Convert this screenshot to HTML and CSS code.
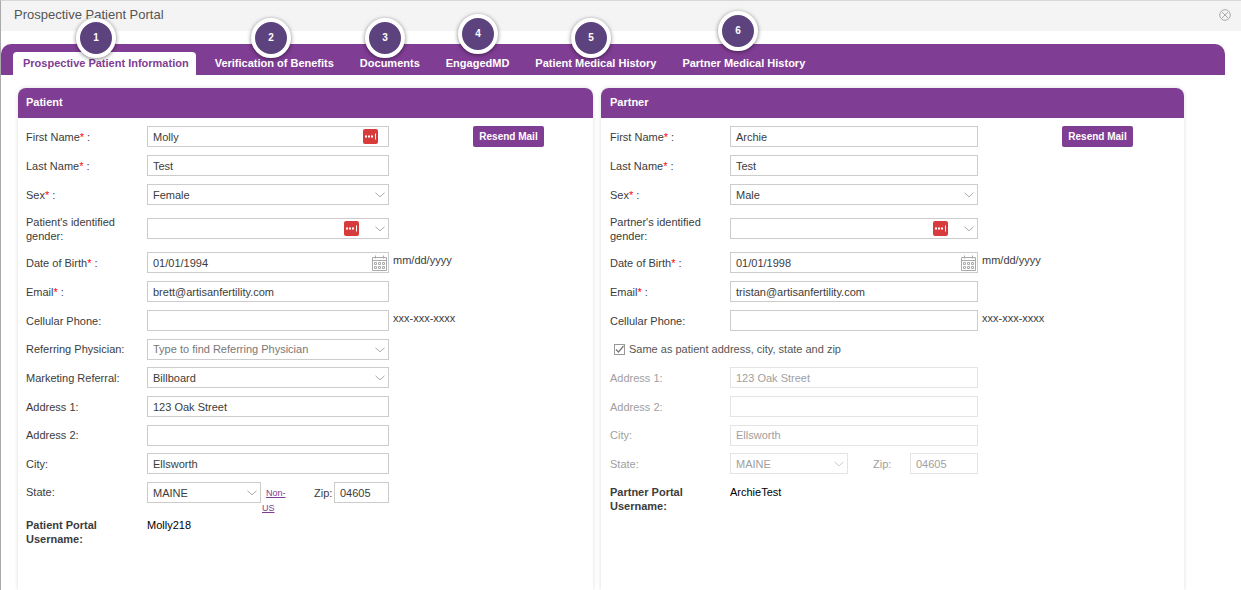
FILE: index.html
```html
<!DOCTYPE html>
<html lang="en">

<head>
  <meta charset="utf-8">
  <title>Prospective Patient Portal</title>
  <meta name="viewport" content="width=device-width, initial-scale=1">
  <link rel="stylesheet" href="styles.css">
</head>

<body>
  <!-- shared icons -->
  <svg class="sprite" aria-hidden="true">
    <symbol id="chevron" viewBox="0 0 10 6">
      <path d="M0.5 0.8 L5 4.8 L9.5 0.8" fill="none" stroke="currentColor" stroke-width="1" />
    </symbol>
    <symbol id="calendar" viewBox="0 0 15 16">
      <path d="M0.5 2.5h14v13h-14z M0.5 5.5h14 M3.5 0.5v3 M11.5 0.5v3" fill="none" stroke="currentColor" />
      <path d="M2.5 7.5h2v2h-2z M6.5 7.5h2v2h-2z M10.5 7.5h2v2h-2z M2.5 11.5h2v2h-2z M6.5 11.5h2v2h-2z M10.5 11.5h2v2h-2z" fill="none" stroke="currentColor" />
    </symbol>
    <symbol id="autofill" viewBox="0 0 15 15">
      <rect width="15" height="15" rx="2" fill="#d83b3b" />
      <path d="M2 6.5h2v2h-2z M5 6.5h2v2h-2z M8 6.5h2v2h-2z M12 4.5h1v6h-1z" fill="#fff" />
    </symbol>
    <symbol id="tick" viewBox="0 0 11 11">
      <path d="M2 5.5 L4.5 8 L9.5 2" fill="none" stroke="currentColor" stroke-width="1.2" />
    </symbol>
    <symbol id="close" viewBox="0 0 12 12">
      <circle cx="6" cy="6" r="5.3" fill="none" stroke="currentColor" />
      <path d="M3 3 L9 9 M9 3 L3 9" stroke="currentColor" />
    </symbol>
  </svg>

  <div class="dialog">
    <header class="title-bar">
      <h1>Prospective Patient Portal</h1>
      <button class="close" type="button" aria-label="Close"><svg><use href="#close" /></svg></button>
    </header>

    <nav class="tabs">
      <a class="tab active" href="#">Prospective Patient Information</a>
      <a class="tab" href="#">Verification of Benefits</a>
      <a class="tab" href="#">Documents</a>
      <a class="tab" href="#">EngagedMD</a>
      <a class="tab" href="#">Patient Medical History</a>
      <a class="tab" href="#">Partner Medical History</a>
    </nav>

    <main class="panels">
      <!-- Patient -->
      <section class="panel">
        <h2>Patient</h2>
        <form class="form">
          <div class="row">
            <label for="p-first">First Name<em>*</em> :</label>
            <div class="field"><input type="text" id="p-first" value="Molly"><svg class="autofill"><use href="#autofill" /></svg></div>
            <div class="aside"><button class="btn" type="button">Resend Mail</button></div>
          </div>
          <div class="row">
            <label for="p-last">Last Name<em>*</em> :</label>
            <div class="field"><input type="text" id="p-last" value="Test"></div>
            <div class="aside"></div>
          </div>
          <div class="row">
            <label for="p-sex">Sex<em>*</em> :</label>
            <div class="field"><select id="p-sex"><option>Female</option><option>Male</option></select><svg class="chevron"><use href="#chevron" /></svg></div>
            <div class="aside"></div>
          </div>
          <div class="row tall">
            <label for="p-gender">Patient's identified gender:</label>
            <div class="field"><select id="p-gender"><option></option></select><svg class="autofill beside"><use href="#autofill" /></svg><svg class="chevron"><use href="#chevron" /></svg></div>
            <div class="aside"></div>
          </div>
          <div class="row">
            <label for="p-dob">Date of Birth<em>*</em> :</label>
            <div class="field"><input type="text" id="p-dob" value="01/01/1994"><svg class="calendar"><use href="#calendar" /></svg></div>
            <div class="aside"><span class="hint">mm/dd/yyyy</span></div>
          </div>
          <div class="row">
            <label for="p-email">Email<em>*</em> :</label>
            <div class="field"><input type="text" id="p-email" value="brett@artisanfertility.com"></div>
            <div class="aside"></div>
          </div>
          <div class="row">
            <label for="p-cell">Cellular Phone:</label>
            <div class="field"><input type="text" id="p-cell"></div>
            <div class="aside"><span class="hint">xxx-xxx-xxxx</span></div>
          </div>
          <div class="row">
            <label for="p-physician">Referring Physician:</label>
            <div class="field"><input type="text" id="p-physician" placeholder="Type to find Referring Physician"><svg class="chevron"><use href="#chevron" /></svg></div>
            <div class="aside"></div>
          </div>
          <div class="row">
            <label for="p-marketing">Marketing Referral:</label>
            <div class="field"><select id="p-marketing"><option>Billboard</option></select><svg class="chevron"><use href="#chevron" /></svg></div>
            <div class="aside"></div>
          </div>
          <div class="row">
            <label for="p-addr1">Address 1:</label>
            <div class="field"><input type="text" id="p-addr1" value="123 Oak Street"></div>
            <div class="aside"></div>
          </div>
          <div class="row">
            <label for="p-addr2">Address 2:</label>
            <div class="field"><input type="text" id="p-addr2"></div>
            <div class="aside"></div>
          </div>
          <div class="row">
            <label for="p-city">City:</label>
            <div class="field"><input type="text" id="p-city" value="Ellsworth"></div>
            <div class="aside"></div>
          </div>
          <div class="row state">
            <label for="p-state">State:</label>
            <div class="group">
              <div class="field"><select id="p-state"><option>MAINE</option></select><svg class="chevron"><use href="#chevron" /></svg></div>
              <div class="non-us"><a href="#">Non-<br>US</a></div>
              <label class="zip-label" for="p-zip">Zip:</label>
              <input class="zip" type="text" id="p-zip" value="04605">
            </div>
            <div class="aside"></div>
          </div>
          <div class="row username">
            <b class="name">Patient Portal Username:</b>
            <span class="value">Molly218</span>
          </div>
        </form>
      </section>

      <!-- Partner -->
      <section class="panel partner">
        <h2>Partner</h2>
        <form class="form">
          <div class="row">
            <label for="r-first">First Name<em>*</em> :</label>
            <div class="field"><input type="text" id="r-first" value="Archie"></div>
            <div class="aside"><button class="btn" type="button">Resend Mail</button></div>
          </div>
          <div class="row">
            <label for="r-last">Last Name<em>*</em> :</label>
            <div class="field"><input type="text" id="r-last" value="Test"></div>
            <div class="aside"></div>
          </div>
          <div class="row">
            <label for="r-sex">Sex<em>*</em> :</label>
            <div class="field"><select id="r-sex"><option>Male</option><option>Female</option></select><svg class="chevron"><use href="#chevron" /></svg></div>
            <div class="aside"></div>
          </div>
          <div class="row tall">
            <label for="r-gender">Partner's identified gender:</label>
            <div class="field"><select id="r-gender"><option></option></select><svg class="autofill beside"><use href="#autofill" /></svg><svg class="chevron"><use href="#chevron" /></svg></div>
            <div class="aside"></div>
          </div>
          <div class="row">
            <label for="r-dob">Date of Birth<em>*</em> :</label>
            <div class="field"><input type="text" id="r-dob" value="01/01/1998"><svg class="calendar"><use href="#calendar" /></svg></div>
            <div class="aside"><span class="hint">mm/dd/yyyy</span></div>
          </div>
          <div class="row">
            <label for="r-email">Email<em>*</em> :</label>
            <div class="field"><input type="text" id="r-email" value="tristan@artisanfertility.com"></div>
            <div class="aside"></div>
          </div>
          <div class="row">
            <label for="r-cell">Cellular Phone:</label>
            <div class="field"><input type="text" id="r-cell"></div>
            <div class="aside"><span class="hint">xxx-xxx-xxxx</span></div>
          </div>
          <div class="row same">
            <div class="check"><input type="checkbox" id="r-same" checked><svg><use href="#tick" /></svg></div>
            <label for="r-same">Same as patient address, city, state and zip</label>
          </div>
          <div class="row off">
            <label for="r-addr1">Address 1:</label>
            <div class="field"><input type="text" id="r-addr1" value="123 Oak Street" disabled></div>
            <div class="aside"></div>
          </div>
          <div class="row off">
            <label for="r-addr2">Address 2:</label>
            <div class="field"><input type="text" id="r-addr2" disabled></div>
            <div class="aside"></div>
          </div>
          <div class="row off">
            <label for="r-city">City:</label>
            <div class="field"><input type="text" id="r-city" value="Ellsworth" disabled></div>
            <div class="aside"></div>
          </div>
          <div class="row off">
            <label for="r-state">State:</label>
            <div class="group wide">
              <div class="field"><select id="r-state" disabled><option>MAINE</option></select><svg class="chevron"><use href="#chevron" /></svg></div>
              <label class="zip-label" for="r-zip">Zip:</label>
              <input class="zip" type="text" id="r-zip" value="04605" disabled>
            </div>
            <div class="aside"></div>
          </div>
          <div class="row username">
            <b class="name">Partner Portal Username:</b>
            <span class="value">ArchieTest</span>
          </div>
        </form>
      </section>
    </main>

    <!-- numbered markers over the tabs -->
    <span class="marker m1">1</span>
    <span class="marker m2">2</span>
    <span class="marker m3">3</span>
    <span class="marker m4">4</span>
    <span class="marker m5">5</span>
    <span class="marker m6">6</span>
  </div>
</body>

</html>
```
FILE: styles.css
```css
* {
  box-sizing: border-box;
}

body {
  margin: 0;
  font-family: "Liberation Sans", Arial, sans-serif;
  font-size: 11px;
  line-height: 14px;
  color: #3c3c3c;
  background: #fff;
}

.sprite {
  display: none;
}

.dialog {
  position: relative;
  display: flex;
  flex-direction: column;
  min-height: 100vh;
  border-left: 1px solid #aaa;
  border-top: 1px solid #d8d8d8;
}

.title-bar {
  display: flex;
  align-items: center;
  justify-content: space-between;
  height: 30px;
  padding: 0 10px 2px 13px;
  background: #f4f4f4;
}

.title-bar h1 {
  margin: 0;
  font-size: 13px;
  font-weight: normal;
  color: #555;
}

.close {
  width: 12px;
  height: 12px;
  padding: 0;
  border: none;
  background: none;
  color: #aaa;
}

.close svg {
  display: block;
  width: 12px;
  height: 12px;
}

/* tabs */
.tabs {
  display: flex;
  align-items: flex-end;
  gap: 9px;
  height: 31px;
  margin: 13px 16px 0 0;
  padding-left: 12px;
  background: #803d94;
  border-radius: 10px 10px 0 0;
}

.tab {
  height: 23px;
  padding: 0 7px 0 10px;
  line-height: 23px;
  font-weight: bold;
  color: #fff;
  text-decoration: none;
  white-space: nowrap;
}

.tab.active {
  background: #fff;
  color: #803d94;
  border-radius: 4px 4px 0 0;
}

/* panels */
.panels {
  flex: 1;
  display: grid;
  grid-template-columns: 575fr 583fr;
  gap: 8px;
  padding: 13px 57px 0 17px;
}

.panel {
  border-radius: 8px 8px 0 0;
  box-shadow: 0 0 4px #ddd;
}

.panel h2 {
  height: 30px;
  margin: 0;
  padding-left: 8px;
  font-size: 11px;
  line-height: 29px;
  color: #fff;
  background: #803d94;
  border-radius: 8px 8px 0 0;
}

.form {
  padding: 4px 0 0 8px;
}

.row {
  display: flex;
  align-items: center;
  height: 29px;
}

.row:nth-child(3n+8) {
  height: 28px;
}

.row.tall {
  height: 39px;
}

.row > label,
.name {
  flex: none;
  width: 121px;
  padding-right: 20px;
}

.row em {
  color: #f00;
  font-style: normal;
}

.field {
  position: relative;
  flex: 1;
}

input[type="text"],
select {
  display: block;
  width: 100%;
  height: 21px;
  margin: 0;
  padding: 0 5px;
  border: 1px solid #ccc;
  border-radius: 0;
  background: #fff;
  font: inherit;
  color: #3c3c3c;
  appearance: none;
}

input::placeholder {
  color: #777;
}

.field svg {
  position: absolute;
  pointer-events: none;
}

.chevron {
  top: 8px;
  right: 4px;
  width: 10px;
  height: 6px;
  color: #aaa;
}

.autofill {
  top: 3px;
  right: 11px;
  width: 15px;
  height: 15px;
}

.autofill.beside {
  right: 30px;
}

.calendar {
  top: 3px;
  right: 2px;
  width: 15px;
  height: 16px;
  color: #aaa;
}

.aside {
  flex: none;
  width: 204px;
  padding-left: 4px;
}

.hint {
  display: block;
  padding-bottom: 5px;
}

.btn {
  display: block;
  width: 71px;
  height: 21px;
  margin-left: 80px;
  padding: 0;
  border: none;
  border-radius: 2px;
  background: #803d94;
  color: #fff;
  font-family: inherit;
  font-size: 10px;
  font-weight: bold;
}

.partner h2 {
  padding-left: 9px;
}

.partner .form {
  padding-left: 9px;
}

.partner .row > label,
.partner .name {
  width: 120px;
}

.partner .aside {
  width: 206px;
}

/* state and zip */
.group {
  display: flex;
  align-items: center;
  flex: 1;
  height: 21px;
}

.row.state {
  align-items: flex-start;
  height: 33px;
  padding-top: 4px;
}

.state > label {
  line-height: 21px;
}

.non-us {
  align-self: flex-start;
  width: 53px;
  padding: 4px 0 0 1px;
  text-indent: 4px;
  font-size: 9px;
  line-height: 15px;
}

.non-us a {
  color: #803d94;
}

.zip-label {
  width: 20px;
}

input.zip {
  width: 55px;
}

.wide .zip-label {
  width: 62px;
  padding-left: 25px;
}

.wide input.zip {
  width: 68px;
}

/* address copied from the patient */
.off,
.off input[type="text"],
.off select {
  color: #a0a0a0;
  opacity: 1;
}

.off input[type="text"],
.off select {
  border-color: #e4e4e4;
}

.off .chevron {
  color: #ccc;
}

.same {
  gap: 4px;
  padding-left: 4px;
  color: #555;
}

.partner .same label {
  width: auto;
}

.check {
  position: relative;
  width: 11px;
  height: 11px;
}

.check input {
  display: block;
  width: 11px;
  height: 11px;
  margin: 0;
  border: 1px solid #999;
  appearance: none;
}

.check svg {
  position: absolute;
  top: 0;
  left: 0;
  width: 11px;
  height: 11px;
  color: #777;
  pointer-events: none;
}

.row.username {
  align-items: flex-start;
  height: auto;
  padding-top: 7px;
}

.value {
  color: #000;
}

/* markers */
.marker {
  position: absolute;
  width: 40px;
  height: 40px;
  border: 4px solid #fff;
  border-radius: 50%;
  background: #5c437e;
  box-shadow: 0 1px 4px rgba(0, 0, 0, 0.5);
  color: #fff;
  font-size: 10px;
  font-weight: bold;
  line-height: 32px;
  text-align: center;
}

.m1 {
  top: 17px;
  left: 75px;
}

.m2 {
  top: 17px;
  left: 250px;
}

.m3 {
  top: 17px;
  left: 364px;
}

.m4 {
  top: 13px;
  left: 457px;
}

.m5 {
  top: 17px;
  left: 570px;
}

.m6 {
  top: 10px;
  left: 717px;
}
```
